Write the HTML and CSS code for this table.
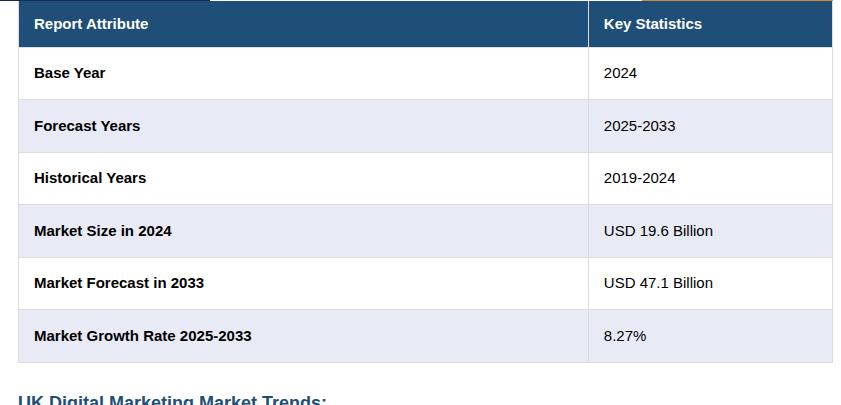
FILE: index.html
```html
<!DOCTYPE html>
<html lang="en">
<head>
<meta charset="utf-8">
<title>UK Digital Marketing Market Report</title>
<link rel="stylesheet" href="styles.css">
</head>
<body>
<div class="topline"><span class="navy"></span><span class="gap"></span><span class="orange"></span></div>
<div class="wrap">
  <table class="stats">
    <thead>
      <tr><th class="c1">Report Attribute</th><th class="c2">Key Statistics</th></tr>
    </thead>
    <tbody>
      <tr><td class="attr">Base Year</td><td>2024</td></tr>
      <tr><td class="attr">Forecast Years</td><td>2025-2033</td></tr>
      <tr><td class="attr">Historical Years</td><td>2019-2024</td></tr>
      <tr><td class="attr">Market Size in 2024</td><td>USD 19.6 Billion</td></tr>
      <tr><td class="attr">Market Forecast in 2033</td><td>USD 47.1 Billion</td></tr>
      <tr><td class="attr">Market Growth Rate 2025-2033</td><td>8.27%</td></tr>
    </tbody>
  </table>
  <h2 class="trends">UK Digital Marketing Market Trends:</h2>
</div>
</body>
</html>
```
FILE: styles.css
```css
html, body {
  margin: 0;
  padding: 0;
  background: #ffffff;
  font-family: "Liberation Sans", Arial, sans-serif;
}
.topline {
  display: flex;
  height: 1px;
}
.topline .navy { width: 210px; background: #0f2a55; }
.topline .gap { width: 432px; }
.topline .orange { width: 191px; background: #c98a3c; }
.wrap {
  padding: 0 8px 0 18px;
}
.stats {
  width: 815px;
  border-collapse: collapse;
  font-size: 15px;
  line-height: 1.5;
  color: #000;
}
.stats th {
  background: #1f4e79;
  color: #fff;
  font-weight: bold;
  text-align: left;
  padding: 11.5px 15px;
  border: 1px solid #dddddd;
  border-top: none;
}
.stats th.c1 { width: 70%; }
.stats td {
  padding: 14.5px 15px;
  border: 1px solid #dddddd;
}
.stats td.attr { font-weight: bold; }
.stats tbody tr:nth-child(even) td { background: #e8eaf6; }
.trends {
  margin: 30px 0 0;
  font-size: 18px;
  font-weight: bold;
  color: #1f4e79;
}
```
